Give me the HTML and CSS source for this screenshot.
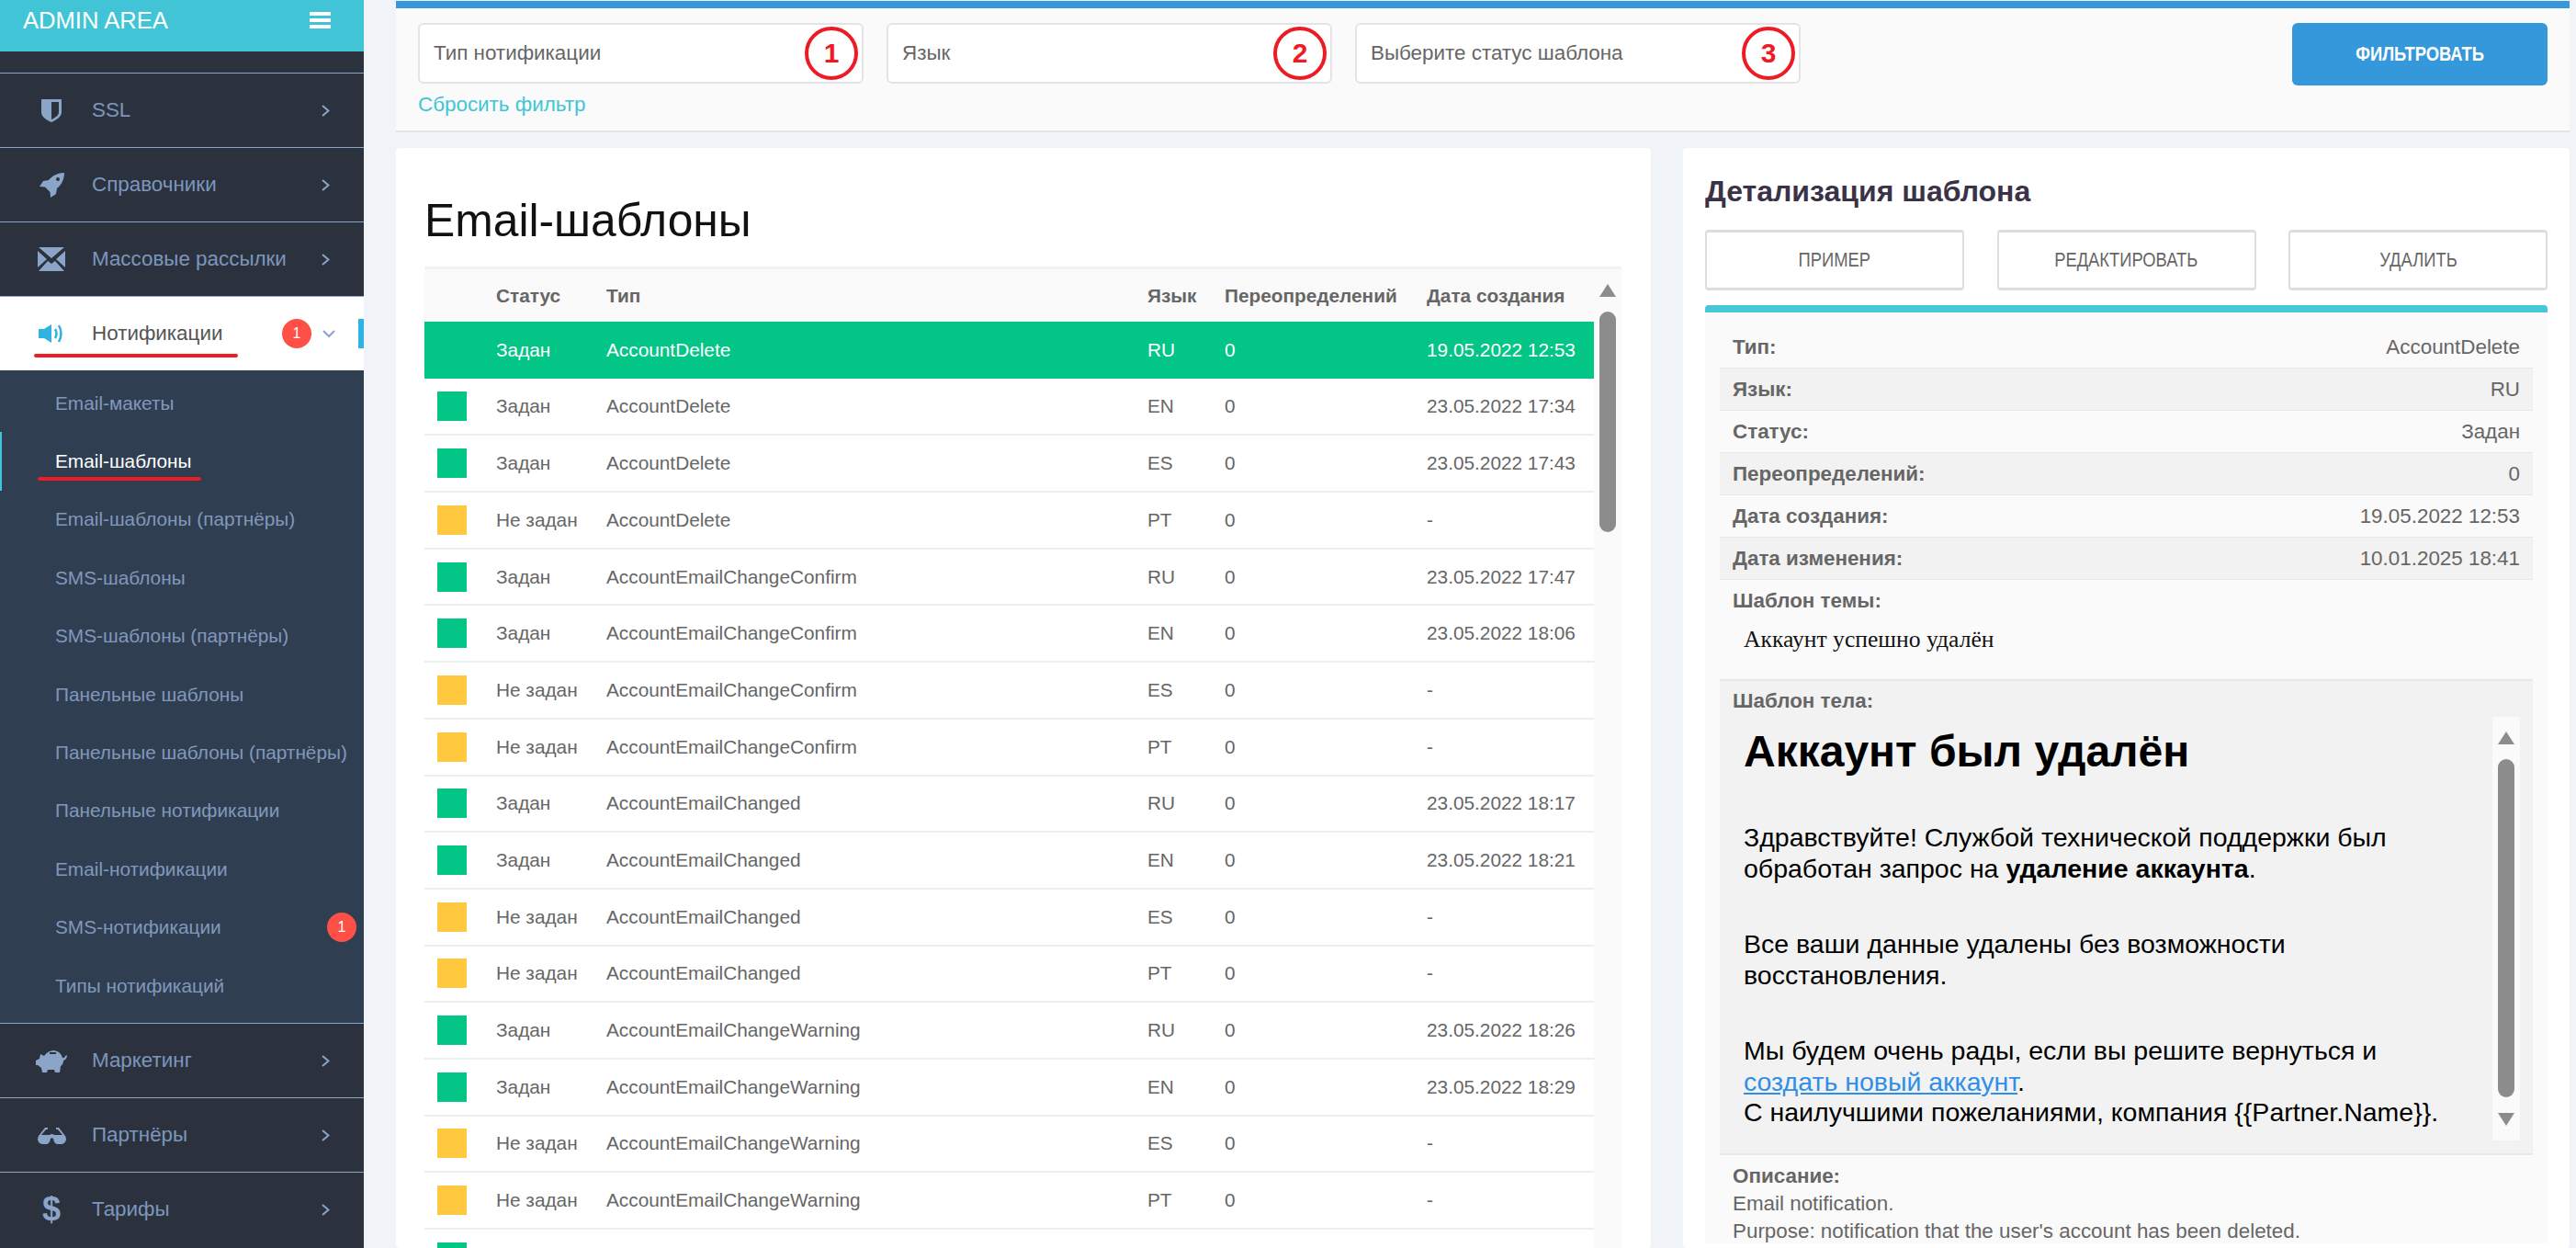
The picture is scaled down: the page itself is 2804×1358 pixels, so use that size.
FILE: index.html
```html
<!DOCTYPE html>
<html lang="ru">
<head>
    <meta charset="UTF-8">
    <meta name="viewport" content="width=device-width, initial-scale=1.0">
    <title>Email-шаблоны</title>
    <link rel="stylesheet" href="styles.css">
</head>
<body>
    <aside class="sidebar">
        <div class="brand">
            <span class="brand-name">ADMIN AREA</span>
            <span class="burger"><i></i><i></i><i></i></span>
        </div>
        <nav class="nav">
            <a class="nav-item">
                <span class="nav-icon"><svg width="22" height="25" viewBox="0 0 22 25"><path fill="#8ba5c9" fill-rule="evenodd" d="M1 0H21Q22 0 22 1V14C22 20 15 23 11 25C7 23 0 20 0 14V1Q0 0 1 0ZM11 3V22C14 20.500 19 18 19 14V3Z"/></svg></span>
                <span class="nav-label">SSL</span>
                <svg class="chev" width="9" height="13" viewBox="0 0 9 13"><path d="M1 1L7.500 6.500L1 12" fill="none" stroke="#8ba5c9" stroke-width="2"/></svg>
            </a>
            <a class="nav-item">
                <span class="nav-icon"><svg width="27" height="27" viewBox="0 0 27 27"><path fill="#8ba5c9" fill-rule="evenodd" d="M27 0C20 0 14 3 10 8L4 9L0 15L6 15.500L11.500 21L12 27L18 23L19 17C24 13 27 7 27 0ZM20 5A2 2 0 1 1 20 9A2 2 0 1 1 20 5Z"/></svg></span>
                <span class="nav-label">Справочники</span>
                <svg class="chev" width="9" height="13" viewBox="0 0 9 13"><path d="M1 1L7.500 6.500L1 12" fill="none" stroke="#8ba5c9" stroke-width="2"/></svg>
            </a>
            <a class="nav-item">
                <span class="nav-icon"><svg width="30" height="26" viewBox="0 0 30 26"><path fill="#8ba5c9" d="M1 0H29L15 12ZM0 4L10 13L0 22ZM30 4L20 13L30 22ZM1 26L11 15L15 18L19 15L29 26Z"/></svg></span>
                <span class="nav-label">Массовые рассылки</span>
                <svg class="chev" width="9" height="13" viewBox="0 0 9 13"><path d="M1 1L7.500 6.500L1 12" fill="none" stroke="#8ba5c9" stroke-width="2"/></svg>
            </a>
            <a class="nav-item active">
                <span class="nav-icon"><svg width="28" height="20" viewBox="0 0 28 20"><path fill="#2fb3e0" d="M0 5H6L14 0V20L6 15H0Z"/><path d="M18 5Q21 10 18 15M22 1Q27 10 22 19" fill="none" stroke="#2fb3e0" stroke-width="2.500"/></svg></span>
                <span class="nav-label">Нотификации</span>
                <span class="badge">1</span>
                <svg class="chev-down" width="14" height="9" viewBox="0 0 14 9"><path d="M1 1L7 7L13 1" fill="none" stroke="#8ba5c9" stroke-width="2"/></svg>
                <span class="active-mark"></span>
                <span class="red-line line-nav"></span>
            </a>
            <div class="subnav">
                <a class="sub-item">Email-макеты</a>
                <a class="sub-item current">Email-шаблоны<span class="red-line line-sub"></span></a>
                <a class="sub-item">Email-шаблоны (партнёры)</a>
                <a class="sub-item">SMS-шаблоны</a>
                <a class="sub-item">SMS-шаблоны (партнёры)</a>
                <a class="sub-item">Панельные шаблоны</a>
                <a class="sub-item">Панельные шаблоны (партнёры)</a>
                <a class="sub-item">Панельные нотификации</a>
                <a class="sub-item">Email-нотификации</a>
                <a class="sub-item">SMS-нотификации<span class="badge sub-badge">1</span></a>
                <a class="sub-item">Типы нотификаций</a>
            </div>
            <a class="nav-item">
                <span class="nav-icon"><svg width="34" height="25" viewBox="0 0 34 25"><path fill="#8ba5c9" fill-rule="evenodd" d="M0 12L4 10L5 5L9 7Q13 1 20 1Q27 2 29 9Q31 10 32 7L34 6Q34 11 30 12Q30 16 27 18L26 25H21L20 22H13L12 25H7L6 20L2 17H0ZM15 3V5H22V3Z"/></svg></span>
                <span class="nav-label">Маркетинг</span>
                <svg class="chev" width="9" height="13" viewBox="0 0 9 13"><path d="M1 1L7.500 6.500L1 12" fill="none" stroke="#8ba5c9" stroke-width="2"/></svg>
            </a>
            <a class="nav-item">
                <span class="nav-icon"><svg width="31" height="19" viewBox="0 0 31 19"><path fill="#8ba5c9" d="M1 10L8 1H11V3H9L4 9H13Q14.500 8 15.500 8Q17 8 18 9H27L22 3H20V1H23L30 10Q31 12 31 14Q30 19 25 19H22Q18 19 17 13Q15.500 11.500 14 13Q13 19 9 19H6Q1 19 0 14Q0 12 1 10Z"/></svg></span>
                <span class="nav-label">Партнёры</span>
                <svg class="chev" width="9" height="13" viewBox="0 0 9 13"><path d="M1 1L7.500 6.500L1 12" fill="none" stroke="#8ba5c9" stroke-width="2"/></svg>
            </a>
            <a class="nav-item">
                <span class="nav-icon dollar">$</span>
                <span class="nav-label">Тарифы</span>
                <svg class="chev" width="9" height="13" viewBox="0 0 9 13"><path d="M1 1L7.500 6.500L1 12" fill="none" stroke="#8ba5c9" stroke-width="2"/></svg>
            </a>
        </nav>
    </aside>

    <main class="main">
        <section class="filter">
            <div class="filter-left">
                <div class="filter-inputs">
                    <div class="select sel-1">Тип нотификации<span class="mark">1</span></div>
                    <div class="select sel-2">Язык<span class="mark">2</span></div>
                    <div class="select sel-3">Выберите статус шаблона<span class="mark">3</span></div>
                </div>
                <a class="reset">Сбросить фильтр</a>
            </div>
            <button class="btn-primary"><span class="narrow">ФИЛЬТРОВАТЬ</span></button>
        </section>

        <div class="columns">
            <section class="card list-card">
                <h1 class="page-title">Email-шаблоны</h1>
                <div class="table-wrap">
                    <table class="tpl-table">
                        <thead>
                            <tr><th class="c-sw"></th><th class="c-st">Статус</th><th class="c-ty">Тип</th><th class="c-la">Язык</th><th class="c-ov">Переопределений</th><th class="c-da">Дата создания</th></tr>
                        </thead>
                        <tbody>
                            <tr class="selected"><td></td><td>Задан</td><td>AccountDelete</td><td>RU</td><td>0</td><td>19.05.2022 12:53</td></tr>
                            <tr><td><span class="sw ok"></span></td><td>Задан</td><td>AccountDelete</td><td>EN</td><td>0</td><td>23.05.2022 17:34</td></tr>
                            <tr><td><span class="sw ok"></span></td><td>Задан</td><td>AccountDelete</td><td>ES</td><td>0</td><td>23.05.2022 17:43</td></tr>
                            <tr><td><span class="sw warn"></span></td><td>Не задан</td><td>AccountDelete</td><td>PT</td><td>0</td><td>-</td></tr>
                            <tr><td><span class="sw ok"></span></td><td>Задан</td><td>AccountEmailChangeConfirm</td><td>RU</td><td>0</td><td>23.05.2022 17:47</td></tr>
                            <tr><td><span class="sw ok"></span></td><td>Задан</td><td>AccountEmailChangeConfirm</td><td>EN</td><td>0</td><td>23.05.2022 18:06</td></tr>
                            <tr><td><span class="sw warn"></span></td><td>Не задан</td><td>AccountEmailChangeConfirm</td><td>ES</td><td>0</td><td>-</td></tr>
                            <tr><td><span class="sw warn"></span></td><td>Не задан</td><td>AccountEmailChangeConfirm</td><td>PT</td><td>0</td><td>-</td></tr>
                            <tr><td><span class="sw ok"></span></td><td>Задан</td><td>AccountEmailChanged</td><td>RU</td><td>0</td><td>23.05.2022 18:17</td></tr>
                            <tr><td><span class="sw ok"></span></td><td>Задан</td><td>AccountEmailChanged</td><td>EN</td><td>0</td><td>23.05.2022 18:21</td></tr>
                            <tr><td><span class="sw warn"></span></td><td>Не задан</td><td>AccountEmailChanged</td><td>ES</td><td>0</td><td>-</td></tr>
                            <tr><td><span class="sw warn"></span></td><td>Не задан</td><td>AccountEmailChanged</td><td>PT</td><td>0</td><td>-</td></tr>
                            <tr><td><span class="sw ok"></span></td><td>Задан</td><td>AccountEmailChangeWarning</td><td>RU</td><td>0</td><td>23.05.2022 18:26</td></tr>
                            <tr><td><span class="sw ok"></span></td><td>Задан</td><td>AccountEmailChangeWarning</td><td>EN</td><td>0</td><td>23.05.2022 18:29</td></tr>
                            <tr><td><span class="sw warn"></span></td><td>Не задан</td><td>AccountEmailChangeWarning</td><td>ES</td><td>0</td><td>-</td></tr>
                            <tr><td><span class="sw warn"></span></td><td>Не задан</td><td>AccountEmailChangeWarning</td><td>PT</td><td>0</td><td>-</td></tr>
                            <tr><td><span class="sw ok"></span></td><td></td><td></td><td></td><td></td><td></td></tr>
                        </tbody>
                    </table>
                    <div class="scrollbar table-scroll">
                        <span class="arrow-up"></span>
                        <span class="thumb"></span>
                    </div>
                </div>
            </section>

            <section class="card detail-card">
                <h2 class="detail-title">Детализация шаблона</h2>
                <div class="detail-actions">
                    <button class="btn-outline"><span class="narrow">ПРИМЕР</span></button>
                    <button class="btn-outline"><span class="narrow">РЕДАКТИРОВАТЬ</span></button>
                    <button class="btn-outline"><span class="narrow">УДАЛИТЬ</span></button>
                </div>
                <div class="detail-box">
                    <div class="row"><b>Тип:</b><span>AccountDelete</span></div>
                    <div class="row alt"><b>Язык:</b><span>RU</span></div>
                    <div class="row"><b>Статус:</b><span>Задан</span></div>
                    <div class="row alt"><b>Переопределений:</b><span>0</span></div>
                    <div class="row"><b>Дата создания:</b><span>19.05.2022 12:53</span></div>
                    <div class="row alt"><b>Дата изменения:</b><span>10.01.2025 18:41</span></div>
                    <div class="subject">
                        <b>Шаблон темы:</b>
                        <div class="subject-text">Аккаунт успешно удалён</div>
                    </div>
                    <div class="body-tpl">
                        <b>Шаблон тела:</b>
                        <div class="preview-wrap">
                            <div class="preview">
                                <h3>Аккаунт был удалён</h3>
                                <p>Здравствуйте! Службой технической поддержки был обработан запрос на <strong>удаление аккаунта</strong>.</p>
                                <p>Все ваши данные удалены без возможности восстановления.</p>
                                <p>Мы будем очень рады, если вы решите вернуться и <a>создать новый аккаунт</a>.<br>С наилучшими пожеланиями, компания {{Partner.Name}}.</p>
                            </div>
                            <div class="scrollbar body-scroll">
                                <span class="arrow-up"></span>
                                <span class="thumb"></span>
                                <span class="arrow-down"></span>
                            </div>
                        </div>
                    </div>
                    <div class="descr">
                        <b>Описание:</b>
                        <div>Email notification.</div>
                        <div>Purpose: notification that the user's account has been deleted.</div>
                    </div>
                </div>
            </section>
        </div>
    </main>
</body>
</html>
```

FILE: styles.css
```css
* {
    box-sizing: border-box;
}

html, body {
    height: 100%;
    overflow: hidden;
}

body {
    margin: 0;
    display: flex;
    background-color: #f0f4f9;
    font-family: "Liberation Sans", Arial, sans-serif;
    color: #666;
}

/* sidebar */
.sidebar {
    width: 396px;
    flex-shrink: 0;
    overflow: hidden;
    background-color: #2b323e;
}

.brand {
    height: 56px;
    padding: 0 36px 12px 25px;
    display: flex;
    align-items: center;
    justify-content: space-between;
    background-color: #41c5d6;
    color: #fff;
    font-size: 25.6px;
}

.burger i {
    display: block;
    width: 23px;
    height: 4px;
    margin: 3px 0;
    background-color: #fff;
}

.nav {
    margin-top: 23px;
}

.nav-item {
    position: relative;
    height: 81px;
    padding-left: 36px;
    display: flex;
    align-items: center;
    border-top: 1px solid #8ba5c9;
    color: #7d96bc;
    font-size: 22.4px;
}

.nav-icon {
    width: 40px;
    margin-right: 24px;
    flex-shrink: 0;
    display: flex;
    align-items: center;
    justify-content: center;
}

.nav-icon svg {
    display: block;
}

.dollar {
    color: #8ba5c9;
    font-size: 36px;
    font-weight: bold;
}

.nav-label {
    flex: 1;
}

.chev {
    margin-right: 37px;
}

.nav-item.active {
    background-color: #fff;
    color: #555;
}

.chev-down {
    margin: 0 31px 0 12px;
}

.badge {
    width: 32px;
    height: 32px;
    border-radius: 50%;
    background-color: #ff5048;
    color: #fff;
    font-size: 16px;
    display: flex;
    align-items: center;
    justify-content: center;
}

.active-mark {
    position: absolute;
    right: 0;
    top: 24px;
    width: 6px;
    height: 32px;
    background-color: #2fb3e0;
}

.red-line {
    position: absolute;
    height: 4px;
    border-radius: 2px;
    background-color: #ed1c24;
}

.line-nav {
    left: 37px;
    top: 62px;
    width: 222px;
}

.subnav {
    padding: 4px 0 9px;
    background-color: #303e52;
}

.sub-item {
    position: relative;
    height: 63.4px;
    padding-left: 60px;
    display: flex;
    align-items: center;
    color: #8198bb;
    font-size: 20.8px;
}

.sub-item.current {
    color: #fff;
    box-shadow: inset 2px 0 0 #41c5d6;
}

.line-sub {
    left: 41px;
    top: 49px;
    width: 178px;
}

.sub-badge {
    position: absolute;
    right: 8px;
    top: 15px;
}

/* main */
.main {
    flex: 1;
    min-width: 0;
    display: flex;
    flex-direction: column;
    padding: 1px 7px 0 35px;
}

.filter {
    height: 143px;
    flex-shrink: 0;
    padding: 16px 24px 0;
    display: flex;
    justify-content: space-between;
    align-items: flex-start;
    background-color: #fafafa;
    border-top: 8px solid #3498db;
    border-bottom: 2px solid #e4e4e4;
}

.filter-inputs {
    display: flex;
    gap: 25px;
}

.select {
    position: relative;
    width: 485px;
    height: 66px;
    padding-left: 15px;
    display: flex;
    align-items: center;
    background-color: #fff;
    border: 2px solid #e4e4e4;
    border-radius: 6px;
    font-size: 22.4px;
}

.mark {
    position: absolute;
    right: 4px;
    top: 2px;
    width: 58px;
    height: 58px;
    border: 4px solid #ed1c24;
    border-radius: 50%;
    display: flex;
    align-items: center;
    justify-content: center;
    color: #ed1c24;
    font-size: 30px;
    font-weight: bold;
}

.reset {
    display: block;
    margin-top: 10px;
    color: #41c5d6;
    font-size: 22.4px;
}

.narrow {
    display: inline-block;
    transform: scaleX(0.82);
}

.btn-primary {
    width: 278px;
    height: 68px;
    border: none;
    border-radius: 6px;
    background-color: #3498db;
    color: #fff;
    font-family: "Liberation Sans", sans-serif;
    font-size: 22.4px;
    font-weight: bold;
}

.columns {
    flex: 1;
    min-height: 0;
    margin-top: 17px;
    display: flex;
    gap: 35px;
    overflow: hidden;
}

.card {
    background-color: #fff;
    border-radius: 4px;
    overflow: hidden;
}

.list-card {
    width: 1366px;
    padding: 0 32px 0 31px;
}

.page-title {
    margin: 0;
    height: 129px;
    padding-top: 50px;
    font-size: 49.8px;
    line-height: 58px;
    font-weight: normal;
    color: #111;
}

.table-wrap {
    display: flex;
    border-top: 3px solid #f2f2f2;
}

.tpl-table {
    width: 1273px;
    border-collapse: collapse;
    table-layout: fixed;
    font-size: 20.8px;
}

.tpl-table th {
    height: 57px;
    padding: 0;
    text-align: left;
    background-color: #fafafa;
    color: #666;
}

.c-sw { width: 78px; }
.c-st { width: 120px; }
.c-ty { width: 589px; }
.c-la { width: 84px; }
.c-ov { width: 220px; }
.c-da { width: 182px; }

.tpl-table td {
    height: 61.7px;
    padding: 0;
    border-bottom: 2px solid #eee;
}

.tpl-table tr.selected td {
    background-color: #03c586;
    color: #fff;
    border-bottom: none;
}

.sw {
    display: block;
    width: 32px;
    height: 32px;
    margin-left: 14px;
}

.sw.ok { background-color: #03c586; }
.sw.warn { background-color: #ffc83f; }

.scrollbar {
    display: flex;
    flex-direction: column;
    align-items: center;
    background-color: #fafafa;
}

.table-scroll {
    width: 30px;
    padding-top: 16px;
}

.thumb {
    width: 18px;
    border-radius: 9px;
    background-color: #8c8c8c;
}

.table-scroll .thumb {
    height: 240px;
    margin-top: 16px;
}

.arrow-up, .arrow-down {
    width: 0;
    height: 0;
    border-left: 9px solid transparent;
    border-right: 9px solid transparent;
}

.arrow-up { border-bottom: 14px solid #8c8c8c; }
.arrow-down { border-top: 14px solid #8c8c8c; }

.detail-card {
    width: 965px;
    padding: 0 24px;
}

.detail-title {
    margin: 0;
    height: 89px;
    padding-top: 28px;
    color: #3a3347;
    font-size: 32px;
    line-height: 38px;
}

.detail-actions {
    display: flex;
    justify-content: space-between;
}

.btn-outline {
    width: 282px;
    height: 66px;
    background-color: #fff;
    border: 2px solid #ddd;
    border-top-width: 3px;
    border-bottom-width: 3px;
    border-radius: 4px;
    color: #666;
    font-family: "Liberation Sans", sans-serif;
    font-size: 22.4px;
}

.detail-box {
    margin-top: 16px;
    padding: 15px 16px 0;
    background-color: #fafafa;
    border-top: 8px solid #46c8d8;
    border-radius: 4px 4px 0 0;
    font-size: 22.4px;
    line-height: 26px;
}

.row {
    height: 46px;
    padding: 0 14px;
    display: flex;
    align-items: center;
    justify-content: space-between;
    border-bottom: 1px solid #e8e8e8;
}

.row.alt {
    background-color: #f2f2f2;
}

.subject {
    height: 110px;
    padding: 10px 14px 0;
    border-bottom: 2px solid #e8e8e8;
}

.subject-text {
    margin-top: 16px;
    padding-left: 12px;
    color: #111;
    font-family: "Liberation Serif", serif;
    font-size: 25.6px;
}

.body-tpl {
    height: 516px;
    padding: 9px 14px 0;
    background-color: #f2f2f2;
    border-bottom: 2px solid #e8e8e8;
}

.preview-wrap {
    height: 461px;
    margin-top: 4px;
    display: flex;
    justify-content: space-between;
}

.preview {
    width: 792px;
    padding-left: 12px;
    color: #000;
    font-size: 28.5px;
    line-height: 33.5px;
}

.preview h3 {
    margin: 10px 0 0;
    font-size: 48px;
    line-height: 56px;
}

.preview p {
    margin: 49px 0 0;
}

.preview a {
    color: #2f8fe8;
    text-decoration: underline;
}

.body-scroll {
    width: 30px;
    padding-top: 16px;
}

.body-scroll .thumb {
    height: 368px;
    margin: 16px 0 17px;
}

.descr {
    padding: 10px 14px 0;
}

.descr div {
    margin-top: 4px;
}
```
